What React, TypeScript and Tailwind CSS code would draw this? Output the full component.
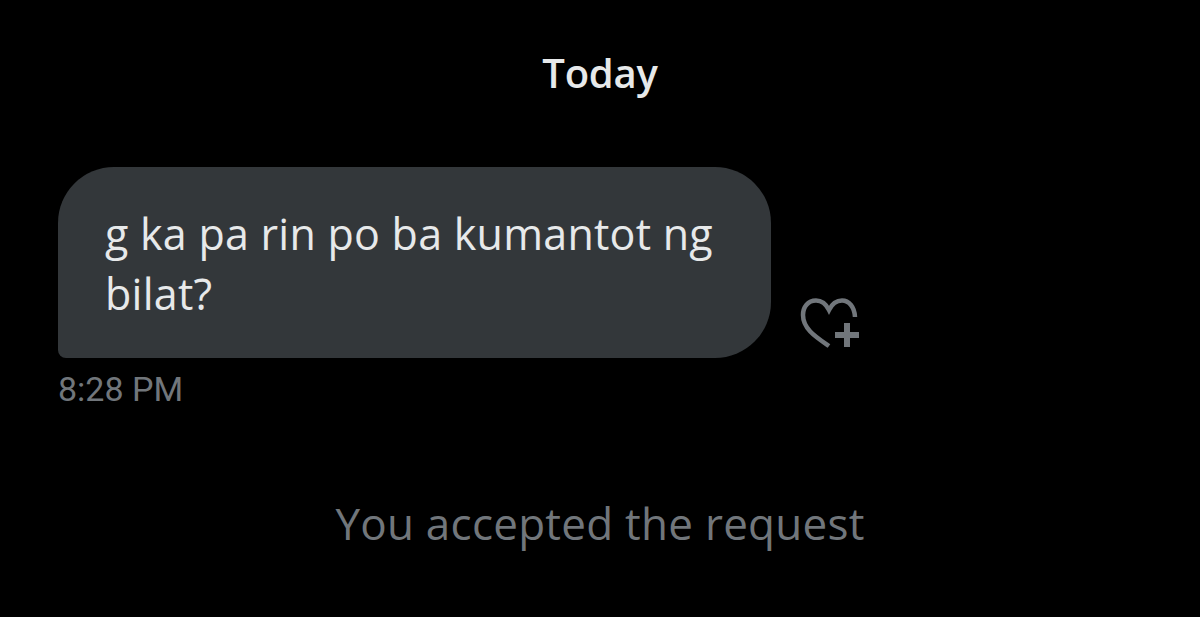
function HeartPlus() {
  return (
    <svg viewBox="0 0 64 56" className="mb-[6px] ml-[29px] h-[56px] w-[64px] shrink-0" fill="none" stroke="#71767b">
      <path d="M55 21 C54.500 11 49 4.500 42 4.500 C36 4.500 32 8 29 14 C26 8 22 4.500 16 4.500 C8 4.500 3 11 3 19 C3 33 16 41 29 50" strokeWidth="4.500" />
      <path d="M35 39 H59 M47 27 V51" strokeWidth="6" />
    </svg>
  )
}

export default function App() {
  return (
    <div className="flex h-[617px] w-[1200px] flex-col overflow-hidden bg-black font-['Open_Sans',sans-serif]">
      <p className="pt-[50px] text-center text-[40px] font-semibold leading-[46px] tracking-[-0.2px] text-[#e7e9ea]">Today</p>

      <div className="mt-[71px] flex items-end pl-[58px]">
        <div className="h-[191px] w-[713px] rounded-[56px] rounded-bl-[8px] bg-[#33373a] px-[47px] pt-[37px] text-[43px] leading-[60px] tracking-[0.25px] text-[#e7e9ea]">
          g ka pa rin po ba kumantot ng bilat?
        </div>
        <HeartPlus />
      </div>

      <p className="pl-[58px] pt-[12px] font-['Roboto',sans-serif] text-[34px] leading-[38px] text-[#71767b]">8:28 PM</p>

      <p className="pt-[89px] text-center text-[44px] leading-[52px] tracking-[0.25px] text-[#71767b]">You accepted the request</p>
    </div>
  )
}
